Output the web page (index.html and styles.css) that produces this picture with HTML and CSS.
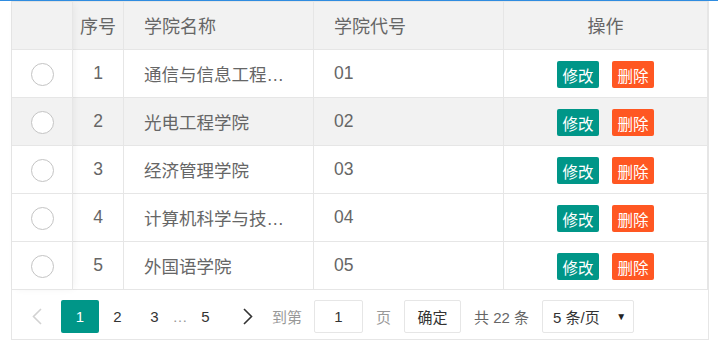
FILE: index.html
```html
<!DOCTYPE html>
<html lang="zh">
<head>
<meta charset="utf-8">
<link rel="stylesheet" href="styles.css">
</head>
<body>
<div class="wrap">
  <div class="tbl">
    <div class="fixed">
      <div class="fcell head"></div>
      <div class="fcell"><span class="radio"></span></div>
      <div class="fcell hover"><span class="radio"></span></div>
      <div class="fcell"><span class="radio"></span></div>
      <div class="fcell"><span class="radio"></span></div>
      <div class="fcell"><span class="radio"></span></div>
    </div>
    <div class="main">
      <div class="row head">
        <div class="cell center">序号</div>
        <div class="cell">学院名称</div>
        <div class="cell">学院代号</div>
        <div class="cell center">操作</div>
      </div>
      <div class="row">
        <div class="cell center">1</div>
        <div class="cell"><span class="clip">通信与信息工程学院</span></div>
        <div class="cell">01</div>
        <div class="cell ops"><span class="btn edit">修改</span><span class="btn del">删除</span></div>
      </div>
      <div class="row hover">
        <div class="cell center">2</div>
        <div class="cell"><span class="clip">光电工程学院</span></div>
        <div class="cell">02</div>
        <div class="cell ops"><span class="btn edit">修改</span><span class="btn del">删除</span></div>
      </div>
      <div class="row">
        <div class="cell center">3</div>
        <div class="cell"><span class="clip">经济管理学院</span></div>
        <div class="cell">03</div>
        <div class="cell ops"><span class="btn edit">修改</span><span class="btn del">删除</span></div>
      </div>
      <div class="row">
        <div class="cell center">4</div>
        <div class="cell"><span class="clip">计算机科学与技术学院</span></div>
        <div class="cell">04</div>
        <div class="cell ops"><span class="btn edit">修改</span><span class="btn del">删除</span></div>
      </div>
      <div class="row">
        <div class="cell center">5</div>
        <div class="cell"><span class="clip">外国语学院</span></div>
        <div class="cell">05</div>
        <div class="cell ops"><span class="btn edit">修改</span><span class="btn del">删除</span></div>
      </div>
    </div>
  </div>
  <div class="pager">
    <span class="pg prev"><svg width="10" height="17" viewBox="0 0 10 17"><path d="M9 1 L1.5 8.5 L9 16" fill="none" stroke="#d2d2d2" stroke-width="1.6"/></svg></span>
    <span class="pg cur">1</span>
    <span class="pg num">2</span>
    <span class="pg num">3</span>
    <span class="pg spr">…</span>
    <span class="pg num">5</span>
    <span class="pg next"><svg width="10" height="17" viewBox="0 0 10 17"><path d="M1 1 L8.5 8.5 L1 16" fill="none" stroke="#333" stroke-width="1.6"/></svg></span>
    <span class="lbl goto">到第</span>
    <span class="input">1</span>
    <span class="lbl page">页</span>
    <span class="okbtn">确定</span>
    <span class="count">共 22 条</span>
    <span class="select"><span>5 条/页</span><span class="caret">▼</span></span>
  </div>
</div>
</body>
</html>
```

FILE: styles.css
```css
* { box-sizing: border-box; }
html, body { margin: 0; padding: 0; background: #fff; }
body {
  border-top: 1px solid #2f8ce0;
  font-family: "Liberation Sans", "Noto Sans CJK SC", sans-serif;
  color: #666;
}
.wrap {
  margin-left: 11px;
  width: 698px;
  border: 1px solid #e6e6e6;
}
.tbl { display: flex; }
.fixed {
  width: 61px;
  flex: none;
  display: flex;
  flex-direction: column;
  position: relative;
  z-index: 1;
  box-shadow: 2px 0 8px -2px rgba(0,0,0,0.07);
  background: #fff;
}
.fcell {
  height: 48px;
  border-right: 1px solid #e6e6e6;
  border-bottom: 1px solid #e6e6e6;
  display: flex;
  align-items: center;
  justify-content: center;
  background: #fff;
}
.fcell.head, .fcell.hover { background: #f2f2f2; }
.radio {
  width: 23px;
  height: 23px;
  border: 1.8px solid #c4c4c4;
  border-radius: 50%;
  background: #fff;
  margin-top: 1px;
}
.main { flex: 1; min-width: 0; }
.row {
  display: grid;
  grid-template-columns: 51px 190px 190px 1fr;
  height: 48px;
  border-bottom: 1px solid #e6e6e6;
}
.row.head, .row.hover { background: #f2f2f2; }
.row.head .cell { padding-bottom: 1px; font-size: 18px; }
.row.head .cell.center { padding: 0 0 1px; }
.cell {
  border-right: 1px solid #e6e6e6;
  padding: 0 20px;
  display: flex;
  align-items: center;
  font-size: 17.5px;
  color: #666;
  min-width: 0;
}
.cell.center { justify-content: center; padding: 0; }
.clip {
  display: block;
  white-space: nowrap;
  overflow: hidden;
  text-overflow: ellipsis;
  min-width: 0;
}
.ops { justify-content: center; gap: 13px; padding: 0; padding-top: 2px; }
.btn {
  width: 42px;
  height: 27px;
  border-radius: 2px;
  color: #fff;
  font-size: 15.5px;
  display: flex;
  align-items: center;
  justify-content: center;
}
.edit { background: #009688; }
.del { background: #ff5722; }

.pager {
  height: 49px;
  display: flex;
  align-items: center;
  padding-top: 3px;
  font-size: 15px;
  color: #333;
}
.pg {
  height: 33px;
  display: flex;
  align-items: center;
  justify-content: center;
}
.prev { width: 38px; margin-left: 6px; }
.cur { width: 38px; margin-left: 5px; background: #009688; color: #fff; border-radius: 2px; }
.num { width: 37px; }
.spr { width: 14px; color: #999; }
.next { width: 38px; margin-left: 5px; }
.lbl { color: #999; }
.goto { margin-left: 5px; }
.input {
  margin-left: 12px;
  width: 49px;
  height: 33px;
  border: 1px solid #e6e6e6;
  border-radius: 2px;
  display: flex;
  align-items: center;
  justify-content: center;
  color: #333;
}
.page { margin-left: 13px; }
.okbtn {
  margin-left: 13px;
  width: 57px;
  height: 33px;
  border: 1px solid #e6e6e6;
  border-radius: 2px;
  display: flex;
  align-items: center;
  justify-content: center;
  color: #333;
}
.count { margin-left: 13px; color: #666; }
.select {
  margin-left: 13px;
  width: 92px;
  height: 33px;
  border: 1px solid #e6e6e6;
  border-radius: 2px;
  display: flex;
  align-items: center;
  justify-content: space-between;
  padding: 0 7px 0 10px;
  color: #333;
}
.caret { font-size: 10px; color: #222; }
```
